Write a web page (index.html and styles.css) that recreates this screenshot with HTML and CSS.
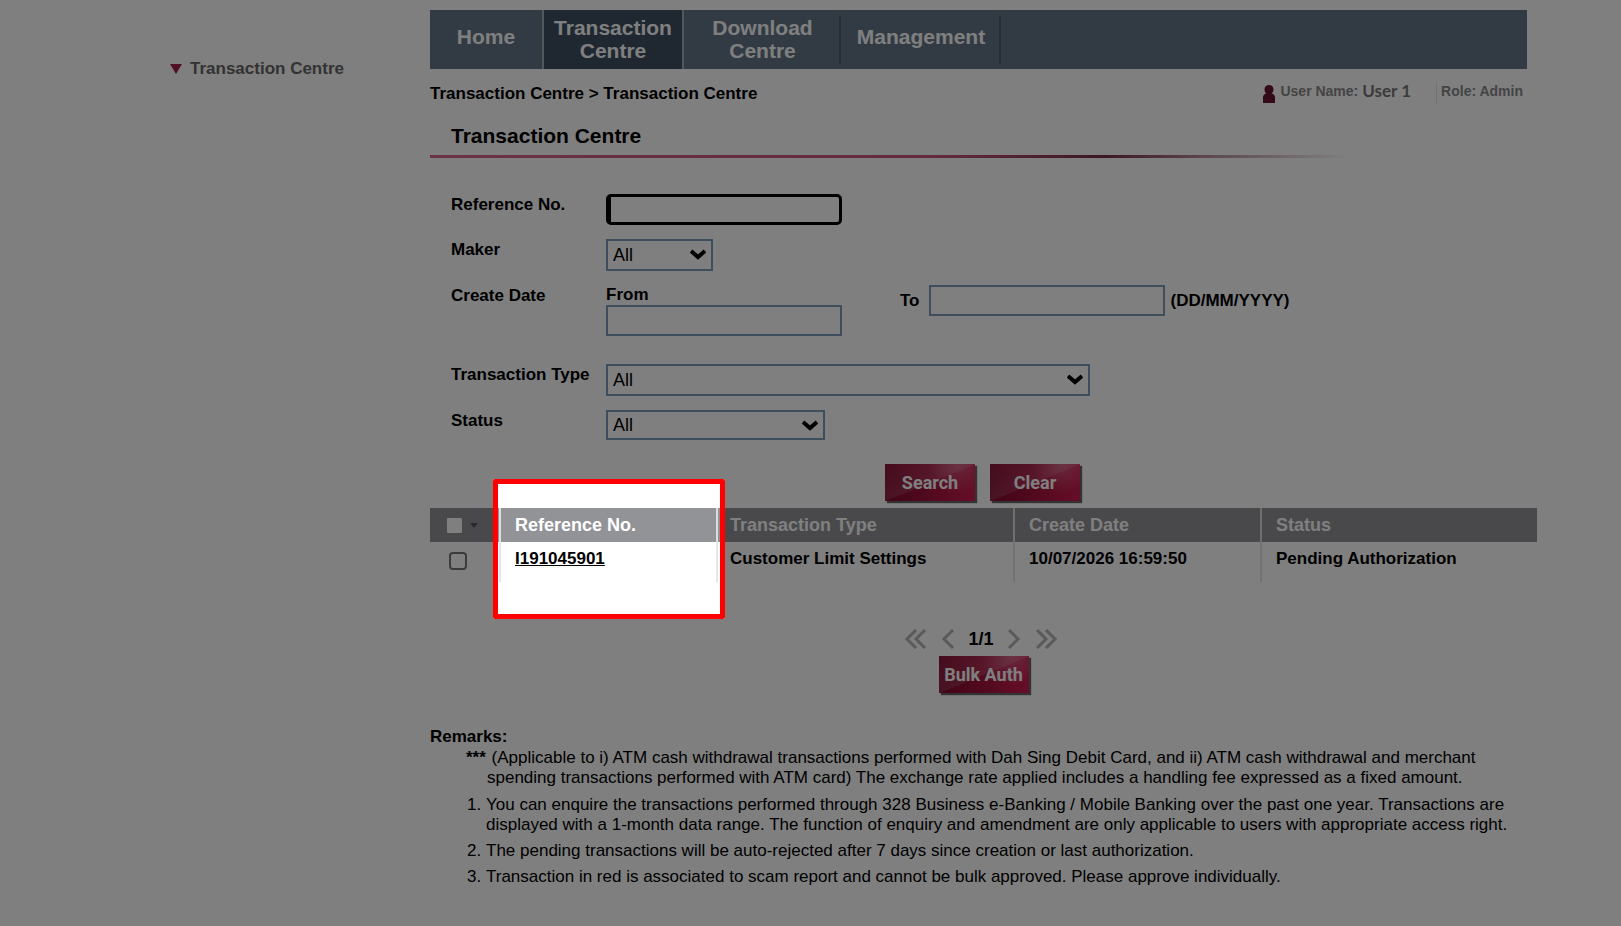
FILE: index.html
```html
<!DOCTYPE html>
<html lang="en">
<head>
<meta charset="utf-8">
<title>Transaction Centre</title>
<link rel="stylesheet" href="styles.css">
</head>
<body>
<div class="page">
    <!-- Left menu -->
    <div class="sidebar">
        <a href="#"><span class="arrow"></span>Transaction Centre</a>
    </div>

    <div class="main">
        <ul class="topnav">
            <li class="home"><a href="#">Home</a></li>
            <li class="active"><a href="#">Transaction Centre</a></li>
            <li class="download"><a href="#">Download Centre</a></li>
            <li class="manage"><a href="#">Management</a></li>
        </ul>

        <div class="infobar">
            <div class="crumb">Transaction Centre &gt; Transaction Centre</div>
            <div class="user">
                <svg width="12" height="18" viewBox="0 0 12 18"><path d="M6 0C3.500 0 1.500 1.700 1.500 4.500c0 1.600.7 3 1.700 4C1.500 9 0 10 0 12v6h12v-6c0-2-1.500-3-3.200-3.500C9.800 7.500 10.500 6.100 10.500 4.500 10.500 1.700 8.500 0 6 0z" fill="#6a1430"/></svg>
                <span class="label">User Name:</span>
                <span class="name">User 1</span>
                <span class="role">Role: Admin</span>
            </div>
        </div>

        <h1>Transaction Centre</h1>
        <div class="redline"></div>

        <form action="#">
            <div class="row">
                <label for="refno">Reference No.</label>
                <input type="text" id="refno" class="focused">
            </div>
            <div class="row">
                <label for="maker">Maker</label>
                <div class="select small">
                    <select id="maker"><option>All</option></select>
                    <svg width="16" height="12" viewBox="0 0 16 12"><path d="M1 2l7 6 7-6" fill="none" stroke="#000" stroke-width="4"/></svg>
                </div>
            </div>
            <div class="row dates">
                <span class="caption">Create Date</span>
                <div class="from">
                    <label for="from">From</label>
                    <input type="text" id="from">
                </div>
                <div class="to">
                    <label for="to">To</label>
                    <input type="text" id="to">
                    <span>(DD/MM/YYYY)</span>
                </div>
            </div>
            <div class="row">
                <label for="type">Transaction Type</label>
                <div class="select large">
                    <select id="type"><option>All</option></select>
                    <svg width="16" height="12" viewBox="0 0 16 12"><path d="M1 2l7 6 7-6" fill="none" stroke="#000" stroke-width="4"/></svg>
                </div>
            </div>
            <div class="row">
                <label for="status">Status</label>
                <div class="select medium">
                    <select id="status"><option>All</option></select>
                    <svg width="16" height="12" viewBox="0 0 16 12"><path d="M1 2l7 6 7-6" fill="none" stroke="#000" stroke-width="4"/></svg>
                </div>
            </div>
            <div class="buttons">
                <button type="submit">Search</button>
                <button type="reset">Clear</button>
            </div>
        </form>

        <table>
            <thead>
            <tr>
                <th class="check"><div><input type="checkbox" aria-label="Select all"><span class="caret"></span></div></th>
                <th class="ref">Reference No.<div class="spotlight"></div></th>
                <th class="type">Transaction Type</th>
                <th class="date">Create Date</th>
                <th>Status</th>
            </tr>
            </thead>
            <tbody>
            <tr>
                <td class="check"><div><input type="checkbox" aria-label="Select I191045901"></div></td>
                <td><a href="#">I191045901</a></td>
                <td class="type">Customer Limit Settings</td>
                <td>10/07/2026 16:59:50</td>
                <td>Pending Authorization</td>
            </tr>
            </tbody>
        </table>

        <div class="pager">
            <a href="#" aria-label="First"><svg width="24" height="20" viewBox="0 0 24 20"><path d="M12 1L3 10l9 9M21 1l-9 9 9 9"/></svg></a>
            <a href="#" aria-label="Previous"><svg width="14" height="20" viewBox="0 0 14 20"><path d="M12 1L3 10l9 9"/></svg></a>
            <span>1/1</span>
            <a href="#" aria-label="Next"><svg width="14" height="20" viewBox="0 0 14 20"><path d="M2 1l9 9-9 9"/></svg></a>
            <a href="#" aria-label="Last"><svg width="24" height="20" viewBox="0 0 24 20"><path d="M3 1l9 9-9 9M12 1l9 9-9 9"/></svg></a>
        </div>
        <div class="bulk"><button type="button">Bulk Auth</button></div>

        <div class="remarks">
            <h2>Remarks:</h2>
            <p><b>***</b> (Applicable to i) ATM cash withdrawal transactions performed with Dah Sing Debit Card, and ii) ATM cash withdrawal and merchant spending transactions performed with ATM card) The exchange rate applied includes a handling fee expressed as a fixed amount.</p>
            <ol>
                <li>You can enquire the transactions performed through 328 Business e-Banking / Mobile Banking over the past one year. Transactions are displayed with a 1-month data range. The function of enquiry and amendment are only applicable to users with appropriate access right.</li>
                <li>The pending transactions will be auto-rejected after 7 days since creation or last authorization.</li>
                <li>Transaction in red is associated to scam report and cannot be bulk approved. Please approve individually.</li>
            </ol>
        </div>
    </div>
</div>
</body>
</html>
```
FILE: styles.css
```css
* {
    box-sizing: border-box;
}
body {
    margin: 0;
    background: #fff;
    color: #000;
    font-family: "Liberation Sans", Arial, sans-serif;
    font-size: 17px;
    line-height: 20px;
    overflow-x: hidden;
}
.page {
    display: flex;
    min-height: 100vh;
    padding: 10px 84px 0 0;
}

/* left menu */
.sidebar {
    flex: 0 0 430px;
    padding: 49px 0 0 170px;
}
.sidebar a {
    display: flex;
    align-items: center;
    color: #666;
    font-weight: bold;
    text-decoration: none;
}
.arrow {
    border: 6px solid transparent;
    border-top: 10px solid #a61e4c;
    border-bottom: 0;
    margin-right: 8px;
}
.main {
    flex: 1;
    min-width: 0;
}

/* top menu */
.topnav {
    display: flex;
    list-style: none;
    margin: 0 10px 0 0;
    padding: 0;
    height: 59px;
    background: #647687;
}
.topnav li {
    display: flex;
    align-items: center;
    justify-content: center;
    text-align: center;
}
.topnav a {
    color: #fff;
    font-size: 21px;
    line-height: 23px;
    font-weight: bold;
    text-decoration: none;
    padding-bottom: 6px;
}
.topnav .active a,
.topnav .download a {
    padding-bottom: 2px;
}
.topnav .home {
    width: 114px;
    border-right: 2px solid #a4aeb8;
}
.topnav .active {
    width: 140px;
    background: #3e4e60;
    border-right: 2px solid #a4aeb8;
}
.topnav .download {
    width: 157px;
    padding: 0 20px;
    background: linear-gradient(#4c5c6c, #4c5c6c) right center / 2px 49px no-repeat;
}
.topnav .manage {
    width: 160px;
    background: linear-gradient(#4c5c6c, #4c5c6c) right center / 2px 49px no-repeat;
}

.infobar {
    display: flex;
    justify-content: space-between;
    margin-right: 14px;
    padding-top: 14px;
}
.crumb {
    padding-top: 1px;
    font-weight: bold;
}
.user {
    display: flex;
    font-size: 14px;
    font-weight: bold;
    line-height: 16px;
    color: #888;
}
.user svg {
    margin: 2px 5px 0 0;
}
.user .name {
    margin: 0 25px 0 4px;
    font-family: Lato, "Open Sans", sans-serif;
    font-size: 17px;
    color: #777;
}
.user .role {
    border-left: 1px solid #e4e4e4;
    padding-left: 4px;
}
h1 {
    margin: 19px 0 6px 21px;
    font-size: 21px;
    line-height: 26px;
}
.redline {
    height: 3px;
    background: linear-gradient(to right, #d4688c 0%, #c8587c 45%, #7a3048 61%, #b89098 70%, #fff 83%);
}

/* search form */
form {
    padding: 36px 0 0 21px;
}
.row {
    display: flex;
    margin-bottom: 14px;
}
.row > label,
.row > .caption {
    width: 155px;
    padding-top: 1px;
    font-weight: bold;
}
input[type="text"] {
    width: 236px;
    height: 31px;
    border: 2px solid #7f9db9;
    background: #fff;
    padding: 0 6px;
    font: 18px "Liberation Sans", Arial, sans-serif;
}
input.focused {
    border: 3px solid #000;
    border-left-width: 5px;
    border-radius: 5px;
    outline: none;
}
.select {
    position: relative;
    height: 32px;
}
.select select {
    width: 100%;
    height: 100%;
    appearance: none;
    border: 2px solid #7f9db9;
    border-radius: 0;
    background: #fff;
    color: #000;
    padding: 0 5px;
    font: 18px "Liberation Sans", Arial, sans-serif;
}
.select svg {
    position: absolute;
    right: 7px;
    top: 10px;
    pointer-events: none;
}
.small {
    width: 107px;
}
.large {
    width: 484px;
}
.medium {
    width: 219px;
    height: 30px;
}
.dates {
    font-weight: bold;
    margin-bottom: 28px;
}
.from {
    width: 294px;
}
.from label,
.from input {
    display: block;
}
.to {
    display: flex;
    align-items: center;
    align-self: flex-start;
}
.to input {
    margin: 0 6px 0 9px;
}

/* buttons */
button {
    width: 90px;
    height: 37px;
    padding: 0;
    border: 0;
    color: #fff;
    font: bold 18px Roboto, "Liberation Sans", sans-serif;
    white-space: nowrap;
    background:
        radial-gradient(circle at 80% 0, rgba(255, 255, 255, 0.25), transparent 30px),
        linear-gradient(to bottom right, rgba(255, 255, 255, 0.06), rgba(255, 255, 255, 0.12) 50%, transparent 51%),
        linear-gradient(to right, #800a2c, #cc1c50);
    box-shadow: 2px 2px 1px #666;
}
.buttons {
    display: flex;
    justify-content: center;
    gap: 15px;
    padding: 10px 23px 0 0;
}

/* result table */
table {
    width: 100%;
    margin-top: 7px;
    border-collapse: separate;
    border-spacing: 0;
    table-layout: fixed;
    text-align: left;
    font-weight: bold;
}
th {
    height: 34px;
    padding: 0 0 0 14px;
    background: #929397;
    color: #fff;
    font-size: 18px;
    border-left: 2px solid #ddd;
}
td {
    height: 40px;
    padding: 7px 0 0 14px;
    vertical-align: top;
    border-left: 2px solid #e6e6e6;
}
td a {
    color: #000;
}
th.check {
    width: 69px;
    padding-left: 17px;
    border: 0;
}
td.check {
    padding: 10px 0 0 19px;
    border: 0;
}
th.ref {
    width: 217px;
    position: relative;
}
th.type,
td.type {
    width: 297px;
    padding-left: 12px;
}
th.date {
    width: 247px;
}
.check div {
    display: flex;
    align-items: center;
}
.check input {
    appearance: none;
    width: 18px;
    height: 18px;
    margin: 0;
    background: #fff;
    border: 2px solid #767676;
    border-radius: 4px;
}
th.check input {
    width: 15px;
    height: 15px;
    border: 0;
    border-radius: 1px;
}
.caret {
    margin-left: 8px;
    border: 4px solid transparent;
    border-top: 5px solid #555;
    border-bottom: 0;
}

/* dims the page except for the reference number */
.spotlight {
    position: absolute;
    z-index: 10;
    left: -8px;
    top: -29px;
    width: 232px;
    height: 140px;
    border: 5px solid #f00;
    border-radius: 2px;
    box-shadow: 0 0 0 3000px rgba(0, 0, 0, 0.5);
    pointer-events: none;
}

.pager {
    display: flex;
    justify-content: center;
    align-items: center;
    gap: 13px;
    margin: 47px 5px 7px 0;
    font-size: 18px;
    font-weight: bold;
}
.pager a {
    height: 20px;
}
.pager path {
    fill: none;
    stroke: #b4b4b4;
    stroke-width: 3;
}
.bulk {
    text-align: center;
    height: 37px;
}

.remarks {
    padding: 33px 20px 0 0;
}
.remarks h2 {
    margin: 0;
    font-size: 17px;
    line-height: 22px;
}
.remarks p {
    margin: 0 0 7px 57px;
    text-indent: -21px;
}
.remarks b {
    margin-right: 1px;
}
.remarks ol {
    margin: 0;
    padding-left: 56px;
}
.remarks li {
    margin-bottom: 6px;
}
```
